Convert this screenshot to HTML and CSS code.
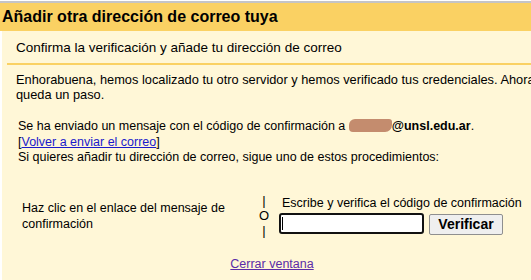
FILE: index.html
```html
<!DOCTYPE html>
<html lang="es">
<head>
  <meta charset="UTF-8">
  <title>Añadir otra dirección de correo tuya</title>
  <link rel="stylesheet" href="styles.css">
</head>
<body>
  <div class="top-rule"></div>
  <h1 class="title-bar">Añadir otra dirección de correo tuya</h1>
  <div class="panel">
    <h2 class="subhead">Confirma la verificación y añade tu dirección de correo</h2>
    <div class="content">
      <p class="intro">Enhorabuena, hemos localizado tu otro servidor y hemos verificado tus credenciales. Ahora solo queda un paso.</p>
      <div class="sent">
        Se ha enviado un mensaje con el código de confirmación a <span class="redacted"></span><b>@unsl.edu.ar</b>.<br>
        [<a href="#" class="resend">Volver a enviar el correo</a>]<br>
        Si quieres añadir tu dirección de correo, sigue uno de estos procedimientos:
      </div>
      <div class="choices">
        <div class="choice-link">Haz clic en el enlace del mensaje de confirmación</div>
        <div class="choice-or">|<br>O<br>|</div>
        <div class="choice-code">
          <label class="code-label" for="code">Escribe y verifica el código de confirmación</label>
          <div class="code-row">
            <span class="code-field">
              <input type="text" id="code" class="code-input">
              <span class="caret"></span>
            </span>
            <button class="verify">Verificar</button>
          </div>
        </div>
      </div>
    </div>
    <div class="footer">
      <a href="#" class="close-link">Cerrar ventana</a>
    </div>
  </div>
</body>
</html>
```

FILE: styles.css
```css
html, body {
  margin: 0;
  padding: 0;
  background: #fff;
  overflow: hidden;
  font-family: "Liberation Sans", Arial, sans-serif;
  font-size: 13px;
  line-height: 15px;
  color: #000;
}

.top-rule {
  height: 2px;
  margin-top: 1px;
  background: #c4c4c6;
}

.title-bar {
  margin: 0;
  height: 28px;
  padding-left: 2px;
  background: #fad163;
  font-size: 16px;
  font-weight: bold;
  line-height: 28px;
  white-space: nowrap;
}

.panel {
  margin-left: 2px;
  width: 540px;
  height: 260px;
  background: #fff7d7;
}

.subhead {
  margin: 0 0 0 5px;
  padding: 9px 0 8px 9px;
  border-bottom: 2px solid #fad163;
  font-size: 13.5px;
  font-weight: normal;
  line-height: 15px;
}

.content {
  padding: 7px 0 0 14px;
}

.intro {
  margin: 0;
  width: 560px;
  font-size: 12.8px;
}

.sent {
  margin-top: 17px;
  padding-left: 2px;
  font-size: 12.5px;
  line-height: 15.5px;
  white-space: nowrap;
}

.redacted {
  display: inline-block;
  width: 43px;
  height: 13px;
  vertical-align: -2px;
  border-radius: 6px 3px 7px 4px;
  background: #c48c6e;
}

.resend {
  color: #1a1acc;
}

.choices {
  display: flex;
  align-items: center;
  margin-top: 27px;
  padding-left: 6px;
  font-size: 12.5px;
}

.choice-link {
  width: 218px;
  padding-top: 2px;
  line-height: 16px;
}

.choice-or {
  width: 16px;
  margin: 0 7px 0 16px;
  font-size: 13px;
  text-align: center;
}

.choice-code {
  display: flex;
  flex-direction: column;
  gap: 2px;
}

.code-label {
  padding-left: 3px;
  white-space: nowrap;
}

.code-row {
  display: flex;
  align-items: center;
  gap: 5px;
}

.code-field {
  position: relative;
  display: flex;
}

.code-input {
  box-sizing: border-box;
  width: 145px;
  height: 21px;
  margin: 0;
  border: 2px solid #111;
  border-radius: 3px;
  background: #fff;
  outline: none;
}

.caret {
  position: absolute;
  left: 3px;
  top: 4px;
  width: 1px;
  height: 13px;
  background: #000;
}

.verify {
  box-sizing: border-box;
  width: 74px;
  height: 21px;
  margin: 1px 0 0;
  padding: 0;
  border: 1px solid #8f8f8f;
  border-radius: 2px;
  background: #efefef;
  font-family: "Liberation Sans", Arial, sans-serif;
  font-size: 14px;
  font-weight: bold;
  color: #000;
}

.footer {
  margin-top: 19px;
  font-size: 12.5px;
  text-align: center;
}

.close-link {
  color: #5b2ca8;
}
```
